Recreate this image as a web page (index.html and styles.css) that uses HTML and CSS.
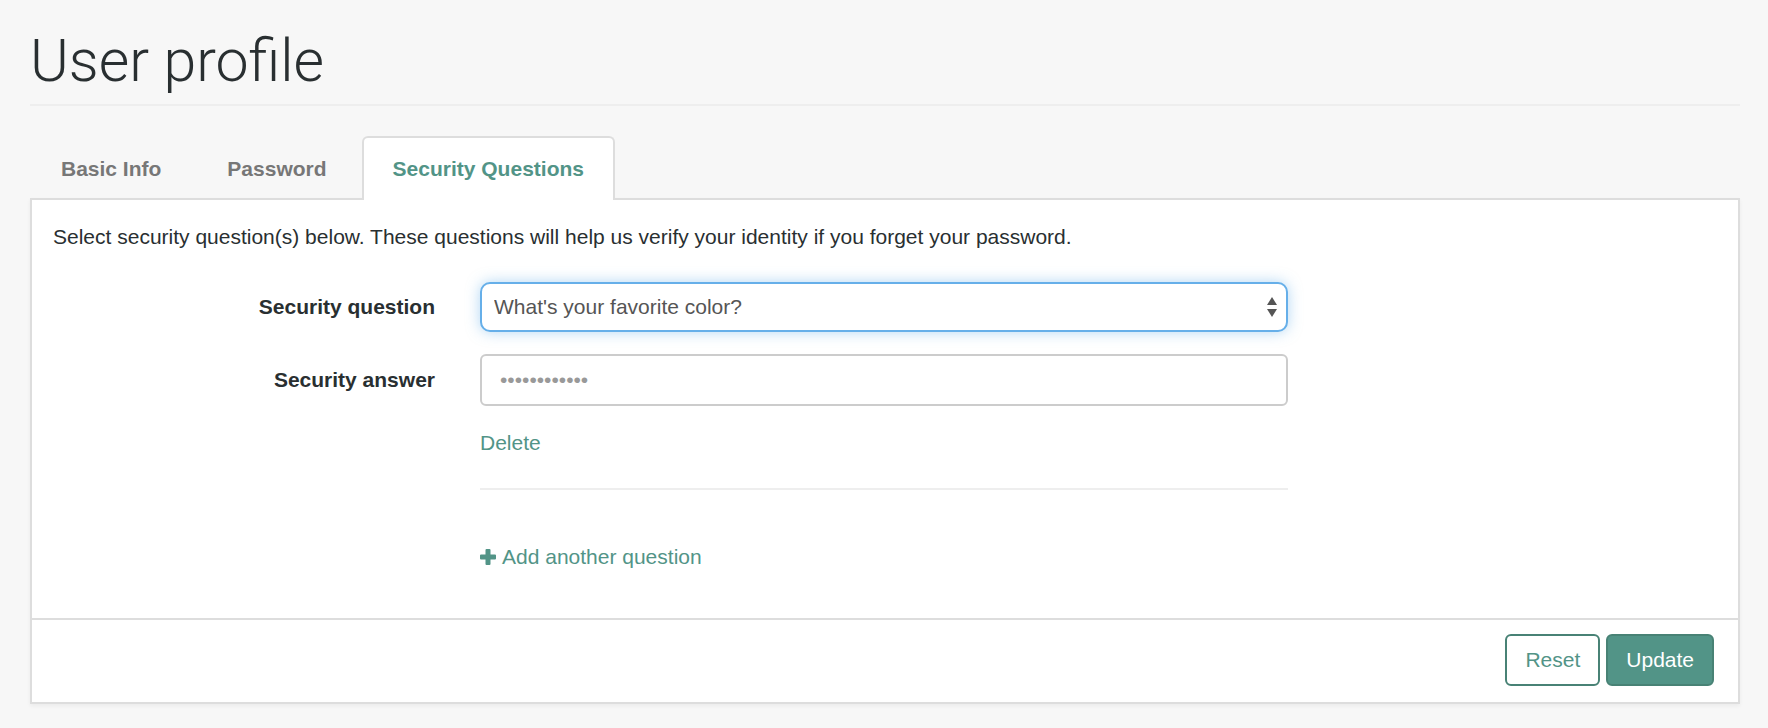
FILE: index.html
```html
<!DOCTYPE html>
<html lang="en">
<head>
<meta charset="utf-8">
<title>User profile</title>
<link rel="stylesheet" href="styles.css">
</head>
<body>
<main class="page">
  <header class="page-header">
    <h1 class="page-title">User profile</h1>
  </header>
  <nav class="tabs">
    <a class="tab" href="#basic">Basic Info</a>
    <a class="tab" href="#password">Password</a>
    <a class="tab tab-active" href="#security" aria-current="page">Security Questions</a>
  </nav>
  <form class="panel">
    <div class="panel-body">
      <p class="intro">Select security question(s) below. These questions will help us verify your identity if you forget your password.</p>
      <div class="row">
        <label class="row-label" for="question">Security question</label>
        <div class="row-field select-wrap">
          <select class="select" id="question">
            <option>What's your favorite color?</option>
          </select>
          <svg class="select-arrows" viewBox="0 0 10 20" aria-hidden="true"><path d="M5 0 10 8H0ZM0 12H10L5 20Z"/></svg>
        </div>
      </div>
      <div class="row">
        <label class="row-label" for="answer">Security answer</label>
        <div class="row-field">
          <input class="input" id="answer" type="password" placeholder="••••••••••••">
        </div>
      </div>
      <div class="row">
        <div class="row-field row-links">
          <a class="link" href="#delete">Delete</a>
          <hr class="divider">
          <a class="link link-add" href="#add"><svg class="plus" viewBox="0 0 16 16" aria-hidden="true"><path d="M6.500 0h3a1 1 0 0 1 1 1v4.500h4.500a1 1 0 0 1 1 1v3a1 1 0 0 1-1 1h-4.500v4.500a1 1 0 0 1-1 1h-3a1 1 0 0 1-1-1v-4.500h-4.500a1 1 0 0 1-1-1v-3a1 1 0 0 1 1-1h4.500v-4.500a1 1 0 0 1 1-1z"/></svg>Add another question</a>
        </div>
      </div>
    </div>
    <footer class="panel-footer">
      <button class="button" type="reset">Reset</button>
      <button class="button button-primary" type="submit">Update</button>
    </footer>
  </form>
</main>
</body>
</html>
```
FILE: styles.css
```css
* { box-sizing: border-box; }

body {
  margin: 0;
  background: #f7f7f7;
  color: #292f31;
  font: 21px/30px "Liberation Sans", Arial, sans-serif;
}

.page { padding: 24px 28px 24px 30px; }

.page-header {
  border-bottom: 2px solid #eee;
  margin-bottom: 30px;
  padding-bottom: 6px;
}

.page-title {
  margin: 0;
  font: 300 59px/74px Roboto, "Liberation Sans", sans-serif;
}

.tabs { display: flex; gap: 4px; }

.tab {
  padding: 16px 29px 14px;
  border: 2px solid transparent;
  border-bottom: 0;
  border-radius: 6px 6px 0 0;
  color: #777;
  font-weight: bold;
  text-decoration: none;
}

.tab-active {
  position: relative;
  z-index: 1;
  margin-bottom: -2px;
  padding-bottom: 16px;
  border-color: #ddd;
  background: #fff;
  color: #529487;
}

.panel {
  border: 2px solid #ddd;
  background: #fff;
  box-shadow: 0 2px 4px rgba(0, 0, 0, 0.05);
}

.panel-body { padding-bottom: 46px; }

.intro { margin: 0; padding: 22px 21px 30px; }

.row {
  display: grid;
  grid-template-columns: 1fr 2fr 1fr;
  align-items: center;
  margin: 0 2px 22px 0;
}

.row-label {
  padding-right: 23px;
  font-weight: bold;
  text-align: right;
}

.row-field { grid-column: 2; padding: 0 22px; }

.select-wrap { position: relative; }

.select,
.input {
  display: block;
  width: 100%;
  margin: 0;
  background: #fff;
  font: inherit;
}

.select {
  height: 50px;
  padding: 0 12px;
  border: 2px solid #66afe9;
  border-radius: 10px;
  outline: 0;
  box-shadow: 0 0 14px rgba(102, 175, 233, 0.5);
  color: #555;
  appearance: none;
}

.select-arrows {
  position: absolute;
  top: 15px;
  right: 33px;
  width: 10px;
  height: 20px;
  fill: #555;
  pointer-events: none;
}

.input {
  height: 52px;
  padding: 0 18px;
  border: 2px solid #ccc;
  border-radius: 6px;
  color: #555;
}

.input::placeholder { color: #999; opacity: 1; }

.row:last-child { margin-bottom: 0; }

.row-links {
  display: flex;
  flex-direction: column;
  align-items: flex-start;
}

.link { color: #529487; text-decoration: none; }

.divider {
  width: 100%;
  margin: 30px 0 52px;
  border: 0;
  border-top: 2px solid #eee;
}

.link-add { display: flex; align-items: center; gap: 6px; }

.plus { width: 16px; height: 16px; fill: currentColor; }

.panel-footer {
  display: flex;
  justify-content: flex-end;
  gap: 6px;
  padding: 14px 24px 16px;
  border-top: 2px solid #ddd;
}

.button {
  height: 52px;
  padding: 0 18px;
  border: 2px solid #488275;
  border-radius: 6px;
  background: #fff;
  color: #529487;
  font: inherit;
}

.button-primary { background: #529487; color: #fff; }
```
